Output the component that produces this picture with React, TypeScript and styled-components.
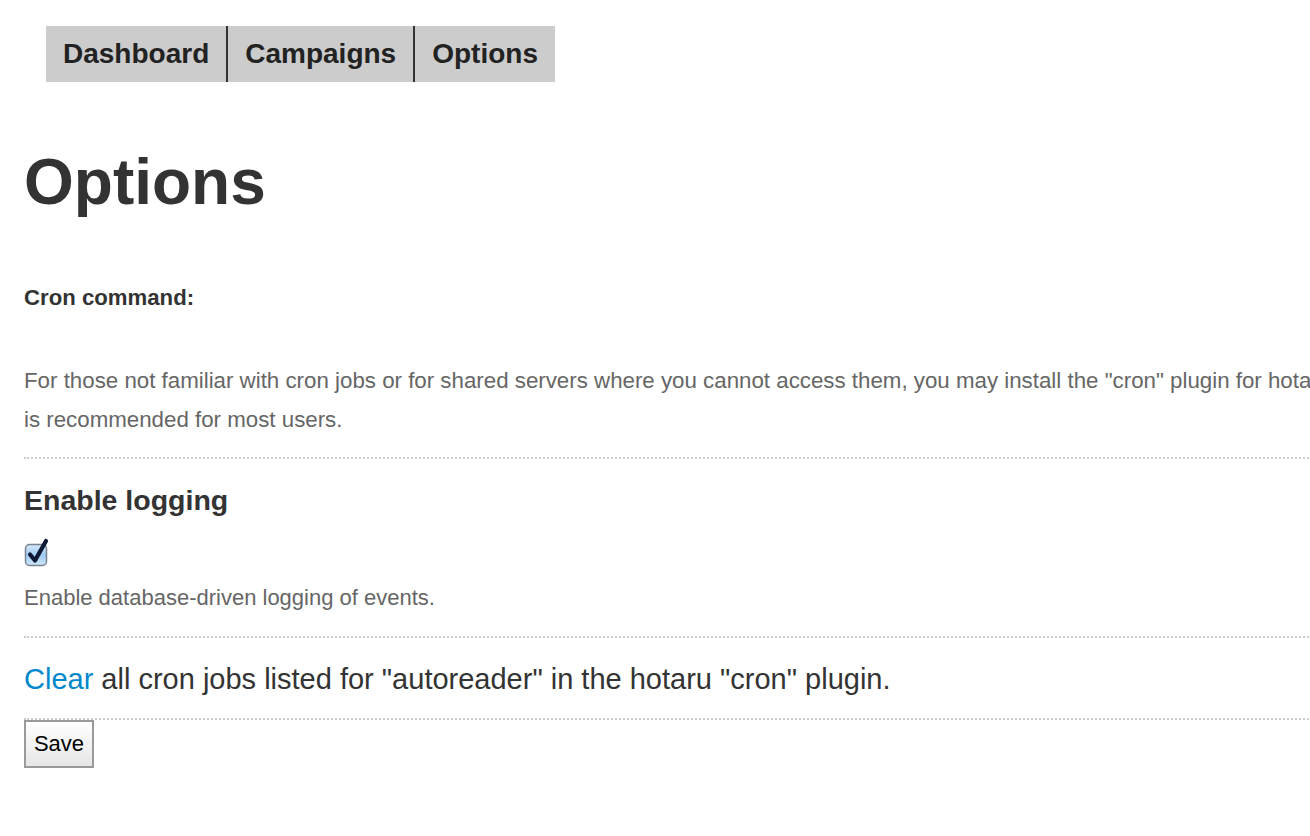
import React from "react";
import styled, { createGlobalStyle } from "styled-components";

const Global = createGlobalStyle`
  html, body { margin: 0; padding: 0; background: #fff; overflow: hidden; }
  body { font-family: "Liberation Sans", Arial, Helvetica, sans-serif; color: #333; }
`;

const Page = styled.div`
  width: 1310px;
  height: 836px;
  overflow: hidden;
  padding: 26px 0 0 24px;
  box-sizing: border-box;
`;

const Nav = styled.nav`
  display: flex;
  margin-left: 22px;
  width: max-content;
  background: #cccccc;
`;

const NavItem = styled.a<{ $first?: boolean }>`
  display: block;
  height: 56px;
  line-height: 56px;
  padding: 0 17px;
  font-size: 28px;
  font-weight: bold;
  color: #222;
  text-decoration: none;
  border-left: ${(p) => (p.$first ? "none" : "2px solid #333")};
`;

const Title = styled.h1`
  margin: 62px 0 0;
  font-size: 64px;
  line-height: 76px;
  font-weight: bold;
  color: #333;
`;

const Label = styled.h4`
  margin: 66px 0 0;
  font-size: 22.2px;
  line-height: 24px;
  font-weight: bold;
  color: #333;
`;

const Paragraph = styled.p`
  margin: 51px 0 0;
  font-size: 22.3px;
  line-height: 39px;
  color: #666;
  white-space: nowrap;
`;

const Divider = styled.hr<{ $top?: number }>`
  border: none;
  border-top: 2px dotted #cccccc;
  margin: ${(p) => p.$top ?? 0}px 0 0;
  width: 1300px;
`;

const SectionHeading = styled.h3`
  margin: 25px 0 0;
  font-size: 28.5px;
  line-height: 32px;
  font-weight: bold;
  color: #333;
`;

const CheckWrap = styled.div`
  margin-top: 21px;
  width: 30px;
  height: 30px;
`;

const Hint = styled.p`
  margin: 18px 0 25px;
  font-size: 22px;
  line-height: 26px;
  color: #666;
`;

const ClearLine = styled.p`
  margin: 23px 0 21px;
  font-size: 29px;
  line-height: 36px;
  color: #333;
`;

const Link = styled.a`
  color: #0088cc;
  text-decoration: none;
`;

const SaveButton = styled.button`
  display: block;
  margin: 0;
  width: 70px;
  height: 48px;
  border: 2px solid #9a9a9a;
  background: linear-gradient(#ffffff, #e6e6e6);
  font-family: "Liberation Sans", Arial, sans-serif;
  font-size: 22px;
  color: #000;
  padding: 0;
`;

function Checkbox() {
  return (
    <CheckWrap>
      <svg width="30" height="30" viewBox="0 0 30 30">
        <defs>
          <linearGradient id="cbg" x1="0" y1="0" x2="0" y2="1">
            <stop offset="0" stopColor="#d6e9fb" />
            <stop offset="0.5" stopColor="#9fcbf3" />
            <stop offset="1" stopColor="#cfe6fb" />
          </linearGradient>
        </defs>
        <rect x="1.5" y="7.5" width="21" height="21" rx="4" fill="url(#cbg)" stroke="#7a8491" strokeWidth="1.5" />
        <path d="M6 17.5 L11 23.5 L22 4" fill="none" stroke="#0e1a33" strokeWidth="4.2" strokeLinecap="round" strokeLinejoin="round" />
      </svg>
    </CheckWrap>
  );
}

export default function App() {
  return (
    <>
      <Global />
      <Page>
        <Nav>
          <NavItem $first href="#">Dashboard</NavItem>
          <NavItem href="#">Campaigns</NavItem>
          <NavItem href="#">Options</NavItem>
        </Nav>
        <Title>Options</Title>
        <Label>Cron command:</Label>
        <Paragraph>
          For those not familiar with cron jobs or for shared servers where you cannot access them, you may install the "cron" plugin for hotaru CMS. This
          <br />
          is recommended for most users.
        </Paragraph>
        <Divider $top={18} />
        <SectionHeading>Enable logging</SectionHeading>
        <Checkbox />
        <Hint>Enable database-driven logging of events.</Hint>
        <Divider />
        <ClearLine>
          <Link href="#">Clear</Link> all cron jobs listed for "autoreader" in the hotaru "cron" plugin.
        </ClearLine>
        <Divider />
        <SaveButton>Save</SaveButton>
      </Page>
    </>
  );
}
